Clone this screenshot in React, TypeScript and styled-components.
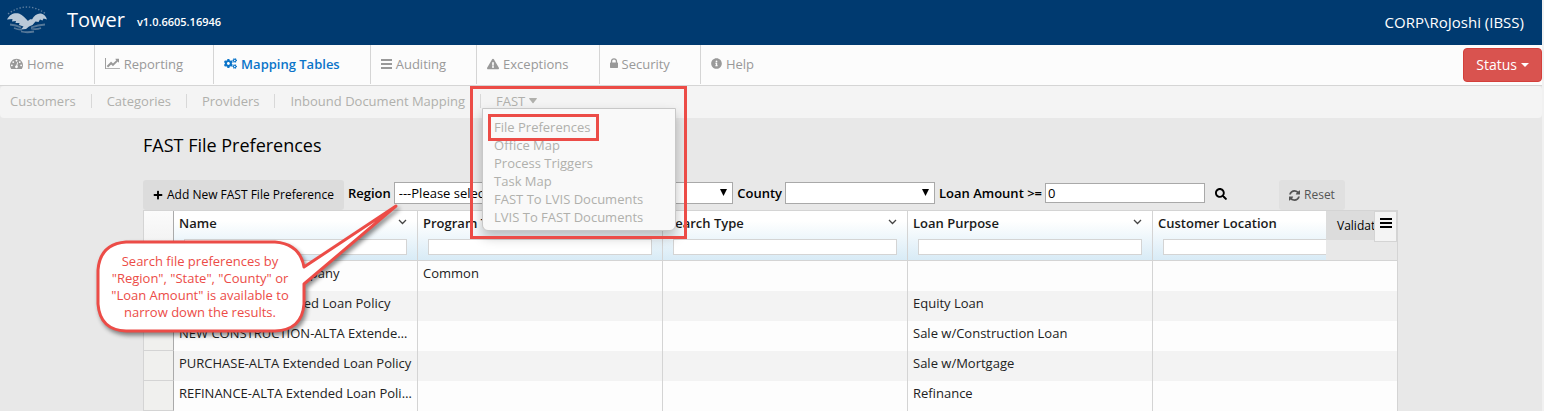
import React from "react";
import styled, { createGlobalStyle } from "styled-components";
import { FaCogs, FaExclamationTriangle, FaInfoCircle, FaPlus, FaSearch } from "react-icons/fa";

const font = '"Open Sans", "Noto Sans", sans-serif';
const red = "#ec4c47";

const Global = createGlobalStyle`
  *, *::before, *::after { box-sizing: border-box; }
  body { margin: 0; background: #f1f1f1; color: #000; font: 13px/18px ${font}; }
  button, input, select { font: inherit; color: inherit; }
  svg { flex-shrink: 0; fill: currentColor; }
`;
const Page = styled.div`position: relative; min-height: 100vh; margin-right: 2px; background: #e8e8e8;`;
const Header = styled.header`
  display: flex; align-items: center; height: 45px; padding: 0 18px 2px 7px;
  background: #003a70; color: #fff;
`;
const Brand = styled.h1`margin: 0 12px 4px 20px; font-size: 20px; line-height: 24px; font-weight: 400;`;
const Version = styled.span`font-size: 11px; font-weight: 600;`;
const User = styled.span`margin-left: auto; font-size: 15px;`;
const Nav = styled.nav`
  display: flex; height: 41px; background: #fcfcfc; border-bottom: 1px solid #d5d5d5;
`;
const Tab = styled.a<{ $active?: boolean }>`
  display: flex; align-items: center; gap: 4px; height: 39px; padding: 0 30px 2px 10px;
  border-right: 1px solid #d5d5d5; text-decoration: none;
  color: ${p => (p.$active ? "#0b74c9" : "#999")}; font-weight: ${p => (p.$active ? 600 : 400)};
  &:last-of-type { border-right: 0; }
`;
const Status = styled.button`
  display: flex; align-items: center; gap: 4px; height: 34px; margin: 3px 0 0 auto; padding: 0 12px;
  background: #d9534f; border: 1px solid #d43f3a; border-radius: 4px; color: #fff; font-size: 14px;
`;
const SubNav = styled.nav`
  display: flex; align-items: center; height: 32px; padding-bottom: 2px; background: #f4f4f4; border-radius: 4px;
`;
const SubLink = styled.a<{ $first?: boolean }>`
  display: flex; align-items: center; gap: 4px; height: 14px; text-decoration: none; color: #b0b0ac;
  padding: 0 15px 0 ${p => (p.$first ? "10px" : "15px")};
  border-left: ${p => (p.$first ? "0" : "1px solid #d8d8d8")};
`;
const DropAnchor = styled.div`position: relative;`;
const Menu = styled.ul`
  position: absolute; z-index: 2; top: 14px; left: 2px; width: 194px; margin: 0; padding: 9px 11px 4px; list-style: none;
  background: #f9f9f9; border: 1px solid #c8c8c8; border-radius: 0 0 6px 6px; box-shadow: 0 6px 12px rgba(0,0,0,.25);
`;
const MenuLink = styled.a`display: block; color: #b0b0ac; text-decoration: none;`;
const MenuFrame = styled.div`
  position: absolute; z-index: 3; pointer-events: none; top: -8px; left: -10px; width: 217px; height: 153px; border: 3px solid ${red};
`;
const ItemFrame = styled.li`
  position: absolute; z-index: 3; pointer-events: none; top: 5px; left: 5px; width: 111px; height: 27px; border: 3px solid ${red};
`;
const Main = styled.main`margin: 0 144px 0 143px;`;
const Title = styled.h2`margin: 0; padding: 15px 0 22px; font-size: 18px; line-height: 25px; font-weight: 400;`;
const Filters = styled.form`display: flex; align-items: center; height: 30px;`;
const GreyButton = styled.button<{ $muted?: boolean }>`
  display: flex; align-items: center; gap: 4px; height: 30px; padding: 0 10px; border: 0; border-radius: 3px;
  background: ${p => (p.$muted ? "#e0e0e0" : "#dcdcdc")}; color: ${p => (p.$muted ? "#555" : "#000")}; font-size: 12px;
`;
const Label = styled.label`margin: 0 3px 4px 4px; font-weight: 600;`;
const SelectWrap = styled.span`position: relative; display: flex; margin-bottom: 4px;`;
const Select = styled.select`
  width: 150px; height: 22px; padding: 0 4px; border: 1px solid #a9a9a9; border-radius: 0; background: #fff; appearance: none;
`;
const Arrow = styled.svg`position: absolute; right: 6px; top: 7px; pointer-events: none;`;
const Amount = styled.input`width: 160px; height: 20px; margin-bottom: 4px; padding: 0 2px; border: 1px solid #a9a9a9;`;
const SearchButton = styled.button`display: flex; margin: 0 52px 3px 10px; padding: 0; border: 0; background: none;`;

const GridBox = styled.div`position: relative; border: 1px solid #d4d4d4; border-bottom: 0; background: #fdfdfd;`;
const Table = styled.table`width: 100%; table-layout: fixed; border-collapse: separate; border-spacing: 0;`;
const Col = styled.col<{ $w?: number }>`width: ${p => (p.$w ? p.$w + "px" : "auto")};`;
const Head = styled.th`
  height: 50px; padding: 3px 0 0; vertical-align: top; text-align: left; font-weight: 600; color: #1a1a1a;
  border-right: 1px solid #d4d4d4; border-bottom: 1px solid #d4d4d4;
  background: linear-gradient(#fff, #fff 20%, #d8ebf6);
  &:first-child { border-right-color: #aaa; background: linear-gradient(#fbfbfb, #eee); }
  &:last-child { background: #e8e8e8; }
  &:nth-last-child(-n + 2) { border-right: 0; }
`;
const HeadTop = styled.div`display: flex; justify-content: space-between; padding: 0 10px 0 5px;`;
const Search = styled.input`display: block; width: calc(100% - 20px); height: 16px; margin: 7px 10px 0; border: 1px solid #d4d4d4; background: #fff;`;
const CutSearch = styled(Search)`width: calc(100% - 10px); margin-right: 0; border-right: 0;`;
const Cell = styled.td`
  height: 30px; padding: 0 5px 6px; border-right: 1px solid #d4d4d4; color: #222;
  overflow: hidden; white-space: nowrap; text-overflow: ellipsis;
  &:last-child { border-right: 0; }
`;
const RowHead = styled(Cell)`background: #f0f0ee; border-right-color: #aaa; border-bottom: 1px solid #d4d4d4;`;
const Row = styled.tr`background: #fdfdfd; &:nth-child(even) { background: #f3f3f3; }`;
const Validate = styled.button`
  display: block; width: 100%; height: 29px; margin-top: -3px; padding: 0 0 0 11px; border: 0; text-align: left; overflow: hidden;
  background: #dcdcdc; color: #000; font-size: 12px; font-weight: 400;
`;
const GridMenu = styled.button`
  position: absolute; top: 0; right: 0; display: flex; justify-content: center; width: 23px; height: 31px; padding: 6px 0 0;
  background: #f4f4f4; border: 1px solid #d4d4d4;
`;
const Callout = styled.aside`
  position: absolute; z-index: 4; top: 200px; left: 92px; width: 312px; height: 142px; pointer-events: none;
`;
const CalloutShape = styled.svg`position: absolute; inset: 0; filter: drop-shadow(2px 3px 2px rgba(0,0,0,.45));`;
const CalloutText = styled.p`
  position: relative; width: 216px; margin: 0; padding: 53px 0 0; color: ${red};
  font-size: 13px; line-height: 17px; text-align: center; white-space: nowrap;
`;

const Eagle = () => (
  <svg width="40" height="33" viewBox="0 0 40 33" aria-hidden="true">
    <path d="M1 9Q20-5 39 9" fill="none" stroke="#5f80a1" strokeWidth="1.300" strokeDasharray="1.400 1.800" />
    <path d="M0 14.500C3 9 7 7.500 12 8.500C16 10 18 13 21 16C22 14.500 24 14 25 14.500C27 10 31 8 34 8.500C37 9 39 11 40 14.500L36.500 13.500L35.500 15.500L33 14.500L31.500 17L28.500 16.500L25.500 20L22 21.500L19 24L14 24.500L16.500 21.500L12 20L12.500 18L8.500 18L9 16L5 16.500L5.500 14Z" fill="#b9c9d8" />
    <path d="M3 19.500Q9 20 14 22.500M38 19.500Q31 20 24 22.500M7 23Q12 25 15 24.500M34 23Q29 25 24 23.500M14 26.500Q20 28 27 26.500" fill="none" stroke="#557899" strokeWidth="1.800" />
  </svg>
);
const Chevron = () => (
  <svg width="9" height="16" viewBox="0 0 9 16" aria-hidden="true"><path d="M1 6l3.500 3.500L8 6" fill="none" stroke="#444" strokeWidth="1.300" /></svg>
);
const Caret = ({ wide }: { wide?: boolean }) =>
  wide ? (
    <svg width="8" height="6" viewBox="0 0 8 6" aria-hidden="true"><path d="M0.500 0h7q.6.200.3.800L4.500 5q-.5.500-1 0L.200.800q-.2-.6.300-.8z" /></svg>
  ) : (
    <svg width="8" height="4" viewBox="0 0 8 4" aria-hidden="true"><path d="M0 0h8L4 4z" /></svg>
  );
const Gauge = () => (
  <svg width="13" height="13" viewBox="0 0 1792 1792" aria-hidden="true">
    <path d="M384 1152q0-53-37.500-90.500t-90.500-37.500-90.500 37.500-37.500 90.500 37.500 90.500 90.500 37.500 90.500-37.500 37.500-90.500zm192-448q0-53-37.500-90.500t-90.500-37.500-90.500 37.500-37.500 90.500 37.500 90.500 90.500 37.500 90.500-37.500 37.500-90.500zm428 481l101-382q6-26-7.500-48.500t-38.500-29.500-48 6.500-30 39.500l-101 382q-60 5-107 43.500t-63 98.500q-20 77 20 146t117 89 146-20 89-117q16-60-6-117t-72-91zm660-33q0-53-37.500-90.500t-90.500-37.500-90.500 37.500-37.500 90.500 37.500 90.500 90.500 37.500 90.500-37.500 37.500-90.500zm-640-640q0-53-37.500-90.500t-90.500-37.500-90.500 37.500-37.500 90.500 37.500 90.500 90.500 37.500 90.500-37.500 37.500-90.500zm448 192q0-53-37.500-90.500t-90.500-37.500-90.500 37.500-37.500 90.500 37.500 90.500 90.500 37.500 90.500-37.500 37.500-90.500zm320 448q0 261-141 483-19 29-54 29h-1402q-35 0-54-29-141-221-141-483 0-182 71-348t191-286 286-191 348-71 348 71 286 191 191 286 71 348z" />
  </svg>
);
const LineChart = () => (
  <svg width="15" height="13" viewBox="0 0 2048 1792" aria-hidden="true">
    <path d="M2048 1536v128h-2048v-1536h128v1408h1920zm-128-1248v435q0 21-19.500 29.500t-35.500-7.500l-121-121-633 633q-10 10-23 10t-23-10l-233-233-416 416-192-192 585-585q10-10 23-10t23 10l233 233 464-464-121-121q-16-16-7.500-35.500t29.500-19.500h435q14 0 23 9t9 23z" />
  </svg>
);
const Bars = ({ size = 11 }: { size?: number }) => (
  <svg width={size} height="10" viewBox={`0 0 ${size} 10`} aria-hidden="true">
    <path d={`M0 0h${size}v2H0zM0 4h${size}v2H0zM0 8h${size}v2H0z`} />
  </svg>
);
const Padlock = () => (
  <svg width="8" height="11" viewBox="320 128 1152 1536" aria-hidden="true">
    <path d="M640 768h512v-192q0-106-75-181t-181-75-181 75-75 181v192zm832 96v576q0 40-28 68t-68 28h-960q-40 0-68-28t-28-68v-576q0-40 28-68t68-28h32v-192q0-184 132-316t316-132 316 132 132 316v192h32q40 0 68 28t28 68z" />
  </svg>
);
const Refresh = () => (
  <svg width="11" height="11" viewBox="128 128 1536 1536" aria-hidden="true">
    <path d="M1639 1056q0 5-1 7-64 268-268 434.500t-478 166.500q-146 0-282.500-55t-243.500-157l-129 129q-19 19-45 19t-45-19-19-45v-448q0-26 19-45t45-19h448q26 0 45 19t19 45-19 45l-137 137q71 66 161 102t187 36q134 0 250-65t186-179q11-17 53-117 8-23 30-23h192q13 0 22.500 9.500t9.500 22.500zm25-800v448q0 26-19 45t-45 19h-448q-26 0-45-19t-19-45 19-45l138-138q-148-137-349-137-134 0-250 65t-186 179q-11 17-53 117-8 23-30 23h-199q-13 0-22.500-9.500t-9.500-22.500v-7q65-268 270-434.500t480-166.500q146 0 284 55.500t245 156.500l130-129q19-19 45-19t45 19 19 45z" />
  </svg>
);

const tabs = [
  { name: "Home", icon: <Gauge /> },
  { name: "Reporting", icon: <LineChart /> },
  { name: "Mapping Tables", icon: <FaCogs size={13} /> },
  { name: "Auditing", icon: <Bars /> },
  { name: "Exceptions", icon: <FaExclamationTriangle size={12} /> },
  { name: "Security", icon: <Padlock /> },
  { name: "Help", icon: <FaInfoCircle size={11} /> },
];
const subLinks = ["Customers", "Categories", "Providers", "Inbound Document Mapping"];
const menu = ["File Preferences", "Office Map", "Process Triggers", "Task Map", "FAST To LVIS Documents", "LVIS To FAST Documents"];
const columns = ["Name", "Program Type", "Search Type", "Loan Purpose"];
const rows = [
  ["First Choice Title Company", "Common", "", ""],
  ["EQUITY-ALTA Extended Loan Policy", "", "", "Equity Loan"],
  ["NEW CONSTRUCTION-ALTA Extended Loan Policy", "", "", "Sale w/Construction Loan"],
  ["PURCHASE-ALTA Extended Loan Policy", "", "", "Sale w/Mortgage"],
  ["REFINANCE-ALTA Extended Loan Policy", "", "", "Refinance"],
];
const Picker = ({ label, option }: { label: string; option?: string }) => (
  <>
    <Label htmlFor={label}>{label}</Label>
    <SelectWrap>
      <Select id={label}><option>{option}</option></Select>
      <Arrow width="7" height="7" viewBox="0 0 7 7"><path d="M0 0h7L3.500 7z" /></Arrow>
    </SelectWrap>
  </>
);

export default function App() {
  return (
    <Page>
      <Global />
      <Header><Eagle /><Brand>Tower</Brand><Version>v1.0.6605.16946</Version><User>CORP\RoJoshi (IBSS)</User></Header>
      <Nav>
        {tabs.map(t => <Tab key={t.name} href="#" $active={t.name === "Mapping Tables"}>{t.icon}{t.name}</Tab>)}
        <Status>Status<Caret /></Status>
      </Nav>
      <SubNav>
        {subLinks.map((t, i) => <SubLink key={t} href="#" $first={i === 0}>{t}</SubLink>)}
        <DropAnchor>
          <SubLink href="#">FAST<Caret wide /></SubLink>
          <Menu>
            {menu.map(m => <li key={m}><MenuLink href="#">{m}</MenuLink></li>)}
            <ItemFrame />
          </Menu>
          <MenuFrame />
        </DropAnchor>
      </SubNav>
      <Main>
        <Title>FAST File Preferences</Title>
        <Filters>
          <GreyButton type="button"><FaPlus size={10} />Add New FAST File Preference</GreyButton>
          <Picker label="Region" option="---Please select---" />
          <Picker label="State" />
          <Picker label="County" />
          <Label htmlFor="amount">Loan Amount &gt;=</Label>
          <Amount id="amount" defaultValue="0" />
          <SearchButton type="button" aria-label="Search"><FaSearch size={12} /></SearchButton>
          <GreyButton type="button" $muted><Refresh />Reset</GreyButton>
        </Filters>
        <GridBox>
          <Table>
            <colgroup><Col $w={30} /><Col $w={244} /><Col $w={245} /><Col $w={245} /><Col $w={245} /><Col /><Col $w={71} /></colgroup>
            <thead>
              <tr>
                <Head />
                {columns.map(c => <Head key={c}><HeadTop>{c}<Chevron /></HeadTop><Search aria-label={c} /></Head>)}
                <Head><HeadTop>Customer Location</HeadTop><CutSearch aria-label="Customer Location" /></Head>
                <Head><Validate>Validate</Validate></Head>
              </tr>
            </thead>
            <tbody>
              {rows.map(r => <Row key={r[0]}><RowHead />{r.map((v, i) => <Cell key={i}>{v}</Cell>)}<Cell colSpan={2} /></Row>)}
            </tbody>
          </Table>
          <GridMenu aria-label="Grid menu"><Bars size={12} /></GridMenu>
        </GridBox>
      </Main>
      <Callout>
        <CalloutShape width="312" height="142" viewBox="0 0 312 142">
          <path d="M34 42H183Q208 44 212 67L304 6L212 84V104Q210 130 183 131H34Q8 130 6 104V70Q8 44 34 42Z" fill="#fff" stroke={red} strokeWidth="3" strokeLinejoin="round" />
        </CalloutShape>
        <CalloutText>Search file preferences by<br />"Region", "State", "County" or<br />"Loan Amount" is available to<br />narrow down the results.</CalloutText>
      </Callout>
    </Page>
  );
}
